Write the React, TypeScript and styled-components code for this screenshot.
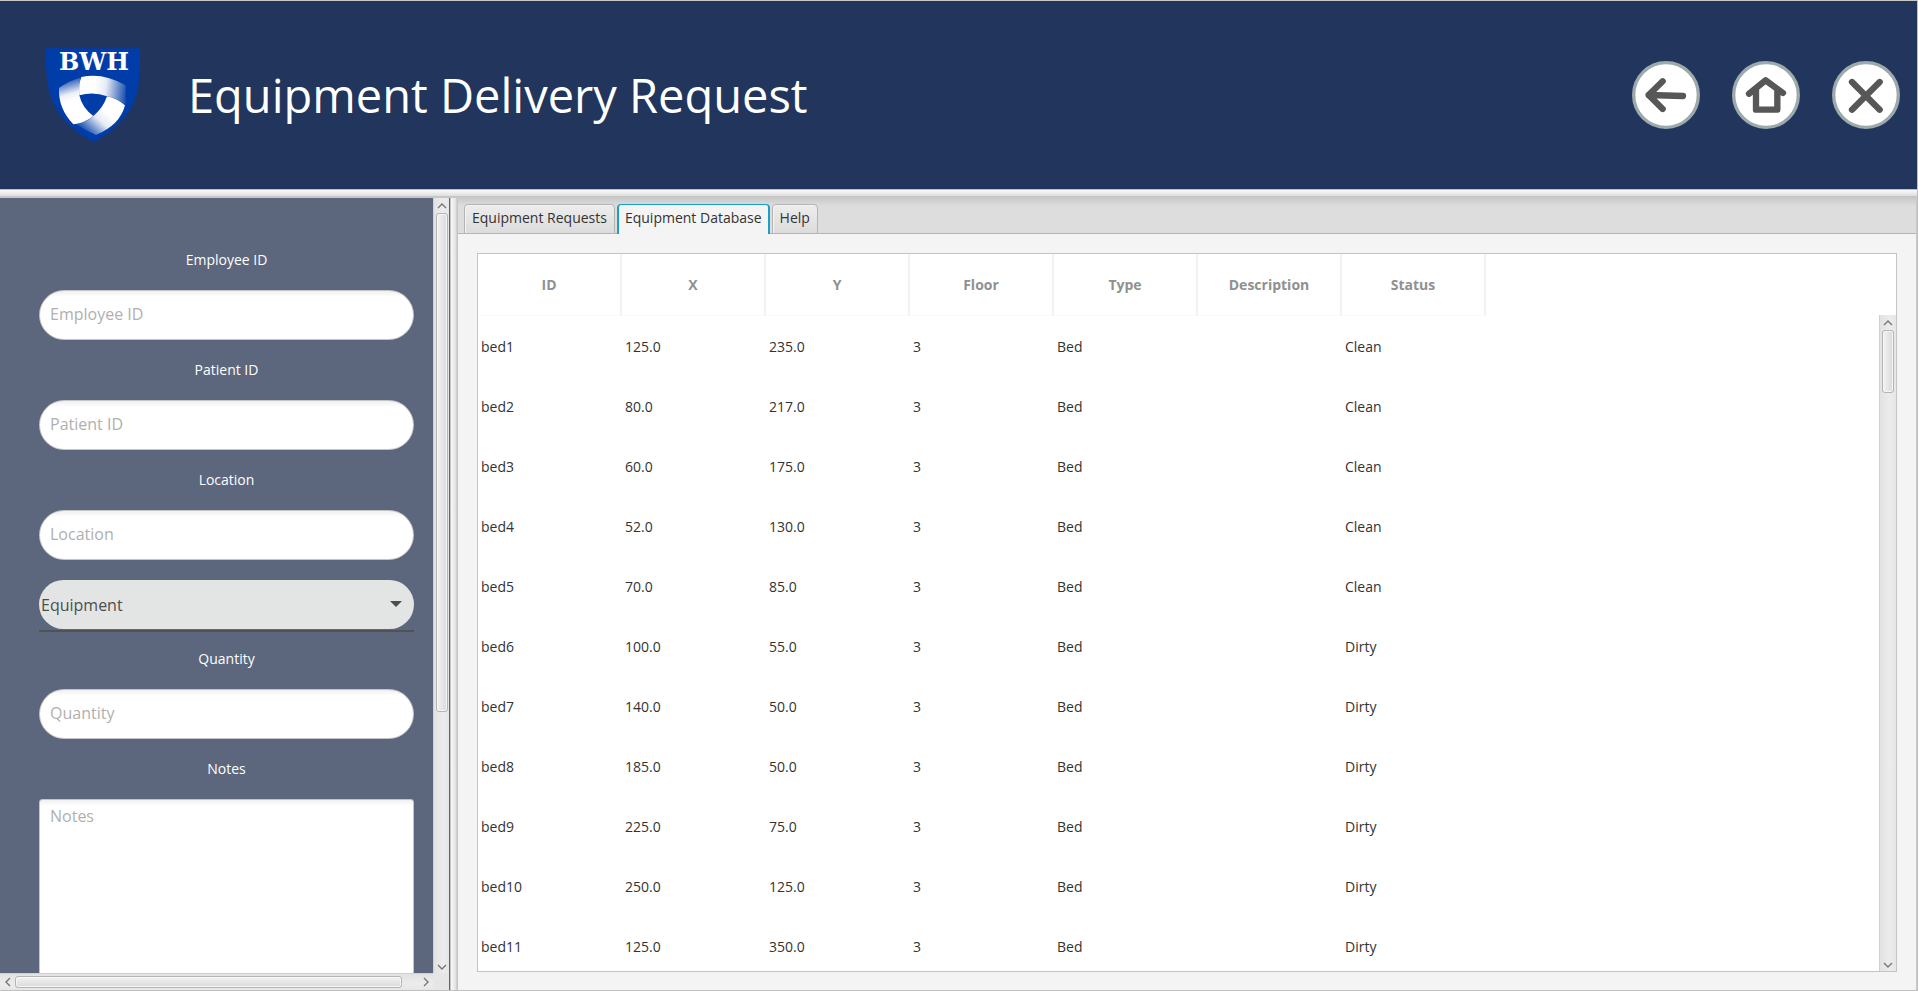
import React from "react";
import styled, { createGlobalStyle, css } from "styled-components";

const GlobalStyle = createGlobalStyle`
  *, *::before, *::after { box-sizing: border-box; }
  body { margin: 0; background: #f4f4f4; }
  body, button, input, select, textarea {
    font-family: "Open Sans", "Noto Sans", sans-serif;
    font-size: 14px;
    line-height: 20px;
  }
`;

const Shell = styled.div`
  display: flex;
  flex-direction: column;
  height: 100vh;
  overflow: hidden;
  border-top: 1px solid #c8c8c8;
  border-right: 1px solid #c0c0c4;
  border-bottom: 1px solid #c0c0c0;
`;

const Header = styled.header`
  display: flex;
  align-items: center;
  flex: none;
  height: 188px;
  padding: 0 17px 0 46px;
  background: #21355d;
`;

const Title = styled.h1`
  flex: 1;
  margin: 0 0 0 48px;
  color: #fff;
  font-size: 47px;
  font-weight: 400;
  line-height: 64px;
`;

const HeaderActions = styled.nav`
  display: flex;
  gap: 32px;
`;

const RoundButton = styled.button`
  width: 68px;
  height: 68px;
  padding: 0;
  border: 0;
  border-radius: 50%;
  background: none;
  cursor: pointer;

  svg { display: block; }
`;

const HorizontalDivider = styled.div`
  flex: none;
  height: 9px;
  background: linear-gradient(#c0c0c4 0 1px, #fafafa 1px, #dedede 7px, #c4c4c4 7px, #c8c8c8);
`;

const VerticalDivider = styled.div`
  flex: none;
  width: 8px;
  background: linear-gradient(to right, #c4c4c4 0 1px, #fafafa 1px, #e0e0e0 6px, #c4c4c4 7px);
`;

const Body = styled.div`
  display: flex;
  flex: 1;
  min-height: 0;
`;

const Sidebar = styled.aside`
  display: grid;
  grid-template-columns: 1fr 16px;
  grid-template-rows: 1fr 17px;
  flex: none;
  width: 450px;
  border-right: 1px solid #5c667d;
  background: #5c667d;
`;

const FormViewport = styled.div`
  min-height: 0;
  overflow: hidden;
`;

const Form = styled.form`
  display: flex;
  flex-direction: column;
  gap: 20px;
  padding: 52px 19px 20px 39px;
`;

const Field = styled.div`
  display: flex;
  flex-direction: column;
  gap: 20px;
`;

const FieldLabel = styled.label`
  color: #fff;
  text-align: center;
`;

const fieldSurface = css`
  width: 100%;
  border: 1px solid #c4c4c4;
  background: linear-gradient(#f0f0f0, #fff 6px);
  color: #333;
  font-size: 16px;
  outline: 0;

  &::placeholder { color: #b0b0b0; opacity: 1; }
`;

const TextInput = styled.input`
  ${fieldSurface}
  height: 50px;
  padding: 0 10px 2px;
  border-radius: 25px;
`;

const NotesInput = styled.textarea`
  ${fieldSurface}
  display: block;
  height: 250px;
  padding: 6px 10px;
  border-radius: 3px;
  resize: none;
`;

const SelectBox = styled.div`
  position: relative;
  height: 49px;

  &::after {
    content: "";
    position: absolute;
    inset: auto 0 -3px;
    height: 2px;
    background: #4f5357;
  }

  svg {
    position: absolute;
    top: 21px;
    right: 12px;
    pointer-events: none;
  }
`;

const Select = styled.select`
  width: 100%;
  height: 49px;
  padding: 0 36px 0 2px;
  border: 0;
  border-radius: 25px;
  background: #e3e5e4;
  color: #4d4d4d;
  font-size: 16px;
  appearance: none;
`;

const Track = styled.div<{ $horizontal?: boolean }>`
  display: flex;
  flex-direction: ${(p) => (p.$horizontal ? "row" : "column")};
  align-items: center;
  justify-content: space-between;
  min-width: 0;
  min-height: 0;
  border: solid #d0d0d0;
  border-width: ${(p) => (p.$horizontal ? "1px 0 0" : "0 0 0 1px")};
  background: linear-gradient(${(p) => (p.$horizontal ? "to bottom" : "to right")}, #e2e2e2, #ececec 60%, #e6e6e6);
`;

const Rail = styled.div<{ $horizontal?: boolean }>`
  display: flex;
  flex-direction: ${(p) => (p.$horizontal ? "row" : "column")};
  flex: 1;
  min-height: 0;
`;

const Thumb = styled.div<{ $horizontal?: boolean; $size: string }>`
  flex: none;
  width: ${(p) => (p.$horizontal ? p.$size : "12px")};
  height: ${(p) => (p.$horizontal ? "12px" : p.$size)};
  border: 1px solid #b4b4b4;
  border-radius: 3px;
  background: linear-gradient(${(p) => (p.$horizontal ? "to bottom" : "to right")}, #f2f2f2, #dadada);
  box-shadow: inset 0 0 0 1px #f6f6f6;
`;

const ArrowButton = styled.button`
  display: grid;
  place-items: center;
  flex: none;
  width: 15px;
  height: 15px;
  padding: 0;
  border: 0;
  background: none;
`;

const Corner = styled.div`
  background: #e6e6e6;
`;

const Main = styled.main`
  display: flex;
  flex: 1;
  flex-direction: column;
  min-width: 0;
  border-right: 1px solid #c8c8c8;
  background: #f4f4f4;
`;

const TabBar = styled.div`
  display: flex;
  flex: none;
  align-items: flex-end;
  gap: 2px;
  height: 36px;
  padding: 0 6px;
  background: linear-gradient(#cacaca, #ddd 8px);
  box-shadow: inset 0 -1px #b4b4b4;
`;

const Tab = styled.button<{ $active?: boolean }>`
  height: 30px;
  padding: 0 7px 2px;
  border: 1px solid #b4b4b4;
  border-radius: 4px 4px 0 0;
  background: linear-gradient(#ededed, #dcdcdc);
  box-shadow: inset 1px 1px #f4f4f4;
  color: #333;
  white-space: nowrap;

  ${(p) =>
    p.$active &&
    css`
      border: solid #1a9fc9;
      border-width: 1px 2px 0;
      padding: 0 6px 3px;
      background: #f4f4f4;
      box-shadow: none;
    `}
`;

const TabPanel = styled.section`
  display: flex;
  flex: 1;
  min-height: 0;
  padding: 19px 19px 18px;
`;

const TableFrame = styled.div`
  display: flex;
  flex: 1;
  min-width: 0;
  border: 1px solid #c4c4c4;
  background: #fff;
`;

const TableViewport = styled.div`
  flex: 1;
  min-width: 0;
  overflow: hidden;
`;

const Table = styled.table`
  width: 100%;
  border-collapse: separate;
  border-spacing: 0;
  table-layout: fixed;
`;

const HeadCell = styled.th`
  width: 144px;
  height: 62px;
  padding: 0;
  border-right: 2px solid #f2f2f2;
  border-bottom: 1px solid #fafafa;
  color: #909090;
  font-weight: 700;
`;

const FillerCell = styled.td`
  padding: 0;
`;

const Cell = styled.td`
  height: 60px;
  padding: 2px 3px 0;
  color: #333;
`;

const TableScroll = styled.div`
  display: flex;
  flex: none;
  width: 17px;
  margin-top: 61px;

  > * { flex: 1; }
`;

const Logo = () => (
  <svg width="94" height="94" viewBox="18 23 282 282" role="img" aria-label="BWH">
    <defs>
      <linearGradient id="top" gradientUnits="userSpaceOnUse" x1="165" y1="130" x2="260" y2="140">
        <stop offset="0" stopColor="#fff" />
        <stop offset="0.35" stopColor="#e6ebf6" />
        <stop offset="1" stopColor="#1a50b0" />
      </linearGradient>
      <linearGradient id="left" gradientUnits="userSpaceOnUse" x1="78" y1="112" x2="98" y2="182">
        <stop offset="0" stopColor="#003da8" />
        <stop offset="0.7" stopColor="#eef1f9" />
        <stop offset="1" stopColor="#fff" />
      </linearGradient>
      <linearGradient id="right" gradientUnits="userSpaceOnUse" x1="200" y1="215" x2="138" y2="284">
        <stop offset="0" stopColor="#fff" />
        <stop offset="0.35" stopColor="#e6ebf6" />
        <stop offset="1" stopColor="#003da8" />
      </linearGradient>
    </defs>
    <path d="M18 24H300V80C298 120 294 160 278 194C255 240 212 280 161 304C108 280 64 240 42 194C26 160 19 120 18 80Z" fill="#003da8" />
    <path d="M57 143Q84 122 120 112L118 165Q126 202 160 227Q134 249 100 252Q54 204 57 143Z" fill="url(#left)" />
    <path d="M201 168Q232 174 255 195Q240 254 168 284Q138 272 108 252Q140 246 160 227Q190 202 201 168Z" fill="url(#right)" />
    <path d="M118 165Q116 130 124 110Q190 96 257 135V196Q232 174 201 168Q160 153 118 165Z" fill="url(#top)" />
    <text x="162" y="90" textAnchor="middle" fill="#fff" fontFamily="DejaVu Serif, serif" fontWeight="700" fontSize="72">BWH</text>
  </svg>
);

const CircleIcon = ({ children }: { children: React.ReactNode }) => (
  <svg width="68" height="68" viewBox="0 0 204 204" fill="none" stroke="#575757" strokeWidth="19" strokeLinecap="round" strokeLinejoin="round" aria-hidden="true">
    <circle cx="102" cy="102" r="97" fill="#fff" stroke="#9caaac" strokeWidth="10" />
    {children}
  </svg>
);

type Direction = "up" | "down" | "left" | "right";

const arrowPaths: Record<Direction, string> = {
  up: "M1 7L5 3L9 7",
  down: "M1 4L5 8L9 4",
  left: "M7 1L3 5L7 9",
  right: "M3 1L7 5L3 9",
};

const ScrollArrow = ({ direction }: { direction: Direction }) => (
  <ArrowButton type="button" aria-label={`Scroll ${direction}`}>
    <svg width="10" height="10" viewBox="0 0 10 10" fill="none" stroke="#777" strokeWidth="1.4">
      <path d={arrowPaths[direction]} />
    </svg>
  </ArrowButton>
);

const ScrollBar = ({ horizontal, size }: { horizontal?: boolean; size: string }) => (
  <Track $horizontal={horizontal}>
    <ScrollArrow direction={horizontal ? "left" : "up"} />
    <Rail $horizontal={horizontal}>
      <Thumb $horizontal={horizontal} $size={size} />
    </Rail>
    <ScrollArrow direction={horizontal ? "right" : "down"} />
  </Track>
);

const TextField = ({ id, label }: { id: string; label: string }) => (
  <Field>
    <FieldLabel htmlFor={id}>{label}</FieldLabel>
    <TextInput id={id} type="text" placeholder={label} />
  </Field>
);

const columns = ["ID", "X", "Y", "Floor", "Type", "Description", "Status"];

const equipment = [
  ["bed1", "125.0", "235.0", "3", "Bed", "", "Clean"],
  ["bed2", "80.0", "217.0", "3", "Bed", "", "Clean"],
  ["bed3", "60.0", "175.0", "3", "Bed", "", "Clean"],
  ["bed4", "52.0", "130.0", "3", "Bed", "", "Clean"],
  ["bed5", "70.0", "85.0", "3", "Bed", "", "Clean"],
  ["bed6", "100.0", "55.0", "3", "Bed", "", "Dirty"],
  ["bed7", "140.0", "50.0", "3", "Bed", "", "Dirty"],
  ["bed8", "185.0", "50.0", "3", "Bed", "", "Dirty"],
  ["bed9", "225.0", "75.0", "3", "Bed", "", "Dirty"],
  ["bed10", "250.0", "125.0", "3", "Bed", "", "Dirty"],
  ["bed11", "125.0", "350.0", "3", "Bed", "", "Dirty"],
];

export default function App() {
  return (
    <>
      <GlobalStyle />
      <Shell>
        <Header>
          <Logo />
          <Title>Equipment Delivery Request</Title>
          <HeaderActions aria-label="Navigation">
            <RoundButton type="button" aria-label="Back">
              <CircleIcon>
                <path d="M153 105L50 102M92 61L50 102L92 144" />
              </CircleIcon>
            </RoundButton>
            <RoundButton type="button" aria-label="Home">
              <CircleIcon>
                <path d="M51 98L101 58L153 96M72 88V146H136V88" />
              </CircleIcon>
            </RoundButton>
            <RoundButton type="button" aria-label="Close">
              <CircleIcon>
                <path d="M60 63L143 146M143 63L60 146" />
              </CircleIcon>
            </RoundButton>
          </HeaderActions>
        </Header>
        <HorizontalDivider />
        <Body>
          <Sidebar>
            <FormViewport>
              <Form>
                <TextField id="employee" label="Employee ID" />
                <TextField id="patient" label="Patient ID" />
                <TextField id="location" label="Location" />
                <SelectBox>
                  <Select aria-label="Equipment" defaultValue="Equipment">
                    <option>Equipment</option>
                  </Select>
                  <svg width="12" height="6" viewBox="0 0 12 6" aria-hidden="true">
                    <path d="M0 0H12L6 6Z" fill="#4d4d4d" />
                  </svg>
                </SelectBox>
                <TextField id="quantity" label="Quantity" />
                <Field>
                  <FieldLabel htmlFor="notes">Notes</FieldLabel>
                  <NotesInput id="notes" placeholder="Notes" />
                </Field>
              </Form>
            </FormViewport>
            <ScrollBar size="67%" />
            <ScrollBar horizontal size="96%" />
            <Corner />
          </Sidebar>
          <VerticalDivider />
          <Main>
            <TabBar role="tablist">
              <Tab type="button" role="tab" aria-selected={false}>Equipment Requests</Tab>
              <Tab type="button" role="tab" aria-selected $active>Equipment Database</Tab>
              <Tab type="button" role="tab" aria-selected={false}>Help</Tab>
            </TabBar>
            <TabPanel role="tabpanel">
              <TableFrame>
                <TableViewport>
                  <Table>
                    <thead>
                      <tr>
                        {columns.map((name) => (
                          <HeadCell key={name} scope="col">{name}</HeadCell>
                        ))}
                        <FillerCell />
                      </tr>
                    </thead>
                    <tbody>
                      {equipment.map((row) => (
                        <tr key={row[0]}>
                          {row.map((value, i) => (
                            <Cell key={columns[i]}>{value}</Cell>
                          ))}
                          <FillerCell />
                        </tr>
                      ))}
                    </tbody>
                  </Table>
                </TableViewport>
                <TableScroll>
                  <ScrollBar size="10%" />
                </TableScroll>
              </TableFrame>
            </TabPanel>
          </Main>
        </Body>
      </Shell>
    </>
  );
}
